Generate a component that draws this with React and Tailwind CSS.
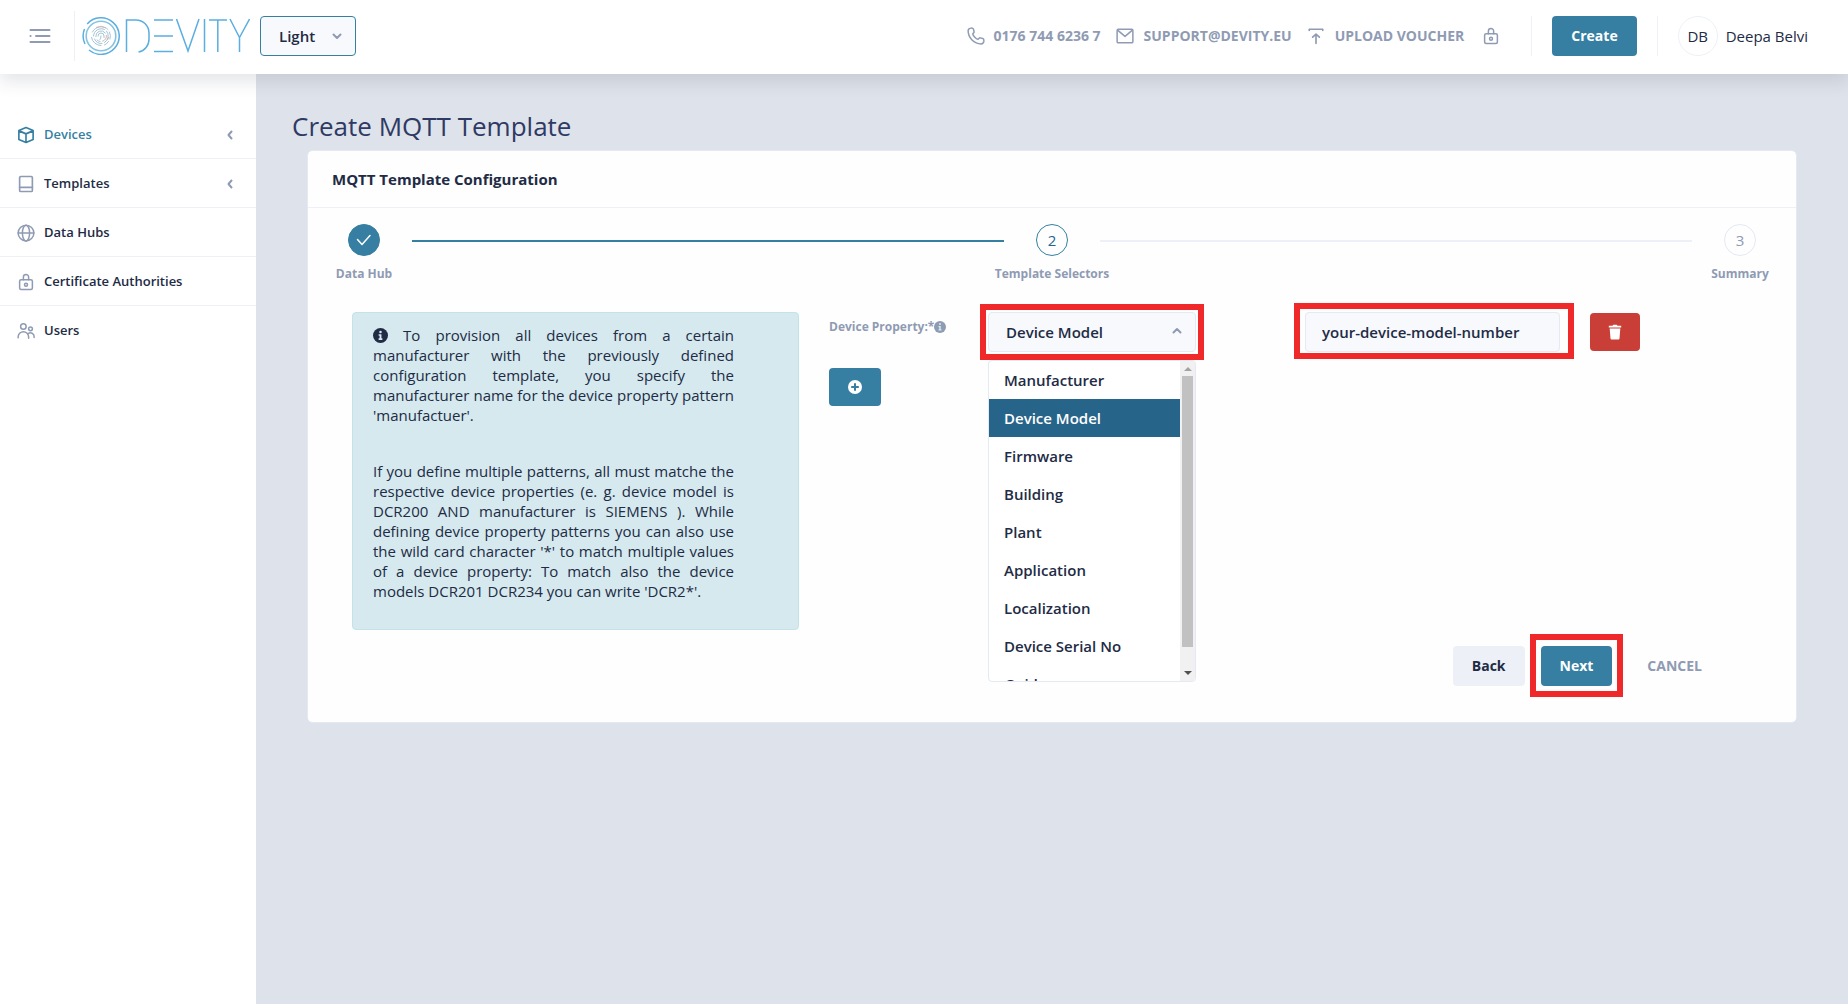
import React from "react";

const stroke = {
  fill: "none",
  stroke: "currentColor",
  strokeWidth: 2,
  strokeLinecap: "round",
  strokeLinejoin: "round",
};

function LockIcon({ className }) {
  return (
    <svg viewBox="0 0 24 24" className={className} aria-hidden="true" {...stroke}>
      <rect x="3.500" y="9" width="17" height="13" rx="2" />
      <path d="M8.500 9V5.500a3.500 3.500 0 0 1 7 0V9" />
      <circle cx="12" cy="15.500" r="2" />
    </svg>
  );
}

function CubeIcon({ className }) {
  return (
    <svg viewBox="0 0 24 24" className={className} aria-hidden="true" {...stroke} strokeWidth="2.200">
      <path d="M12 2 21.500 6v12L12 22l-9.500-4V6zM3 6.500l9 4 9-4M12 11v10.500" />
    </svg>
  );
}

function BookIcon({ className }) {
  return (
    <svg viewBox="0 0 24 24" className={className} aria-hidden="true" {...stroke} strokeWidth="2.200">
      <rect x="3.500" y="2" width="17" height="20" rx="1.500" />
      <path d="M3.500 16.500h17" />
    </svg>
  );
}

function GlobeIcon({ className }) {
  return (
    <svg viewBox="0 0 24 24" className={className} aria-hidden="true" {...stroke}>
      <circle cx="12" cy="12" r="10.500" />
      <ellipse cx="12" cy="12" rx="4.800" ry="10.500" />
      <path d="M1.500 12h21" />
    </svg>
  );
}

function PeopleIcon({ className }) {
  return (
    <svg viewBox="0 0 24 24" className={className} aria-hidden="true" {...stroke}>
      <circle cx="8.500" cy="6" r="3.700" />
      <circle cx="18" cy="9" r="2.500" />
      <path d="M1.500 21v-1a6.800 6.800 0 0 1 14 0v1.500M15 15.500A4.800 4.800 0 0 1 22.800 19.400V20.500" />
    </svg>
  );
}

function PhoneIcon({ className }) {
  return (
    <svg viewBox="0 0 24 24" className={className} aria-hidden="true" {...stroke}>
      <path d="M5.100 1.500c1.600-.2 3.100.2 3.500 1.400l.9 3.600c.3 1.200-1.800 1.900-1.800 2.800 0 2 5 7 7 7 .9 0 1.600-2.100 2.800-1.800l3.600.9c1.200.4 1.600 1.900 1.400 3.500-.3 2-1.800 3.600-3.600 3.600C9.500 22.500 1.500 14.500 1.500 5.100c0-1.800 1.600-3.300 3.600-3.600z" />
    </svg>
  );
}

function MailIcon({ className }) {
  return (
    <svg viewBox="0 0 24 24" className={className} aria-hidden="true" {...stroke}>
      <rect x="1.500" y="3" width="21" height="18" rx="1.500" />
      <path d="m2.500 4.500 9.500 8 9.500-8" />
    </svg>
  );
}

function UploadIcon({ className }) {
  return (
    <svg viewBox="0 0 24 24" className={className} aria-hidden="true" {...stroke} strokeWidth="2.200">
      <path d="M3 4.500V3h18v1.500M12 22V9.500M7.500 13.500 12 9.500l4.500 4" />
    </svg>
  );
}

function Chevron({ className, d = "m5 9 7 7 7-7" }) {
  return (
    <svg viewBox="0 0 24 24" className={className} aria-hidden="true" {...stroke} strokeWidth="4">
      <path d={d} />
    </svg>
  );
}

function InfoIcon({ className }) {
  return (
    <svg viewBox="0 0 24 24" className={className} aria-hidden="true">
      <circle cx="12" cy="12" r="12" fill="currentColor" />
      <g className="fill-[#d5e9ee]">
        <circle cx="12" cy="6.200" r="2" />
        <path d="M9 10h4.500v6.500H15V19H9v-2.500h1.500v-4H9z" />
      </g>
    </svg>
  );
}

function Logo({ className }) {
  return (
    <svg viewBox="0 0 168 38" className={className} role="img" aria-label="Devity" fill="none">
      <g stroke="#5aaee0" strokeWidth="1.500">
        <path d="M5.200 7A18.300 18.300 0 1 1 7 33" />
        <path d="M2.500 12A18.500 18.500 0 0 0 3 27" />
        <circle cx="19" cy="19" r="14.800" stroke="#86c3e0" strokeWidth="1.600" />
        <path d="M44.500 35V3H54a13 13 0 0 1 13 13v6a13 13 0 0 1-10.500 13" />
        <path d="M72 3h19M72 19h19M72 34.500h19" />
        <path d="m94.500 2 11.500 32L117 2M122.500 2v33M127 3h18M135.800 3v32M148 2l9.500 18.500L167.500 2M157.500 20.500V35" />
      </g>
      <g stroke="#a3c4d6" strokeWidth="1" strokeLinecap="round">
        <path d="M10.500 15a9.500 9.500 0 0 1 15.500-2.500M27.500 15a9.500 9.500 0 0 1 .5 7M26.500 24.500a9.500 9.500 0 0 1-4 3.500M19 28.500a9.500 9.500 0 0 1-9.500-8" />
        <path d="M11.500 19a7.500 7.500 0 0 1 11-6.500M24.500 14a7.500 7.500 0 0 1-2 11.500M20 26.500a7.500 7.500 0 0 1-7.500-4.500" />
        <path d="M13.800 19.500a5.300 5.300 0 0 1 9.500-3.500M15 23a5.300 5.300 0 0 0 3 1.500M16 19a3 3 0 0 1 6 0v1.500M18 22.500q1-1.500 1-3.500" />
      </g>
      <path d="M14 10.500a10 10 0 0 1 10 .5M24.300 18a5.500 5.500 0 0 1-4 6.300M26.500 20a7.500 7.500 0 0 1-1 3" stroke="#cdb9b9" />
    </svg>
  );
}

const navItems = [
  { label: "Devices", Icon: CubeIcon, active: true, expandable: true },
  { label: "Templates", Icon: BookIcon, expandable: true },
  { label: "Data Hubs", Icon: GlobeIcon },
  { label: "Certificate Authorities", Icon: LockIcon },
  { label: "Users", Icon: PeopleIcon },
];

const properties = [
  "Manufacturer",
  "Device Model",
  "Firmware",
  "Building",
  "Plant",
  "Application",
  "Localization",
  "Device Serial No",
  "Guid",
];

function Highlight({ className }) {
  return <span className={`pointer-events-none absolute z-20 border-6 border-[#ef2929] ${className}`} />;
}

function Header() {
  return (
    <header className="relative z-30 flex h-[74px] shrink-0 items-center bg-white pr-10 pb-0.5 shadow-[0_8px_16px_0_rgba(44,51,73,0.12)]">
      <button type="button" aria-label="Toggle menu" className="ml-7 text-[#8f9bb3]">
        <svg viewBox="0 0 24 18" className="h-[18px] w-6" aria-hidden="true" {...stroke}>
          <path d="M2.500 3h19M8 9h13.500M2.500 15h19M2.500 9h.1" />
        </svg>
      </button>
      <div className="ml-[22px] h-[50px] w-px bg-[#edf1f7]" />
      <a href="#home" className="ml-[7px]">
        <Logo className="h-[38px] w-[168px]" />
      </a>
      <div className="relative ml-[10px]">
        <select
          aria-label="Theme"
          className="h-10 w-24 appearance-none rounded border border-[#367fa2] bg-[#f7f9fc] pl-[18px] text-[15px] font-semibold"
        >
          <option>Light</option>
        </select>
        <Chevron className="pointer-events-none absolute top-[14px] right-[13px] size-3 text-[#8f9bb3]" />
      </div>
      <div className="ml-auto flex items-center text-sm font-bold text-[#8f9bb3]">
        <a href="#phone" className="flex items-center gap-[9px]">
          <PhoneIcon className="size-[18px]" />
          0176 744 6236 7
        </a>
        <a href="#mail" className="ml-[15px] flex items-center gap-[10px]">
          <MailIcon className="size-[18px]" />
          SUPPORT@DEVITY.EU
        </a>
        <a href="#voucher" className="ml-[15px] flex items-center gap-[10px]">
          <UploadIcon className="size-[18px]" />
          UPLOAD VOUCHER
        </a>
        <button type="button" aria-label="Lock" className="ml-[18px]">
          <LockIcon className="size-[18px]" />
        </button>
      </div>
      <div className="ml-[31px] h-10 w-px bg-[#edf1f7]" />
      <button type="button" className="ml-5 h-10 rounded bg-[#367fa2] px-[19px] text-sm font-bold text-white">
        Create
      </button>
      <div className="ml-5 h-10 w-px bg-[#edf1f7]" />
      <button type="button" className="ml-5 flex items-center gap-2 text-[15px]">
        <span className="flex size-10 items-center justify-center rounded-full border border-[#edf1f7]">DB</span>
        Deepa Belvi
      </button>
    </header>
  );
}

function Sidebar() {
  return (
    <nav className="w-64 shrink-0 bg-white pt-9">
      <ul className="divide-y divide-[#edf1f7]">
        {navItems.map(({ label, Icon, active, expandable }) => (
          <li key={label}>
            <a
              href="#nav"
              className={`flex h-12 items-center gap-[9px] pt-0.5 pr-5 pl-[17px] text-[13px] font-semibold ${active ? "text-[#367fa2]" : ""}`}
            >
              <Icon className={`size-[18px] ${active ? "" : "text-[#8f9bb3]"}`} />
              {label}
              {expandable && <Chevron d="m15 5-6 7 6 7" className="ml-auto size-3 text-[#8f9bb3]" />}
            </a>
          </li>
        ))}
      </ul>
    </nav>
  );
}

function Step({ mark, label, className }) {
  return (
    <li className="flex w-8 flex-col items-center gap-2.5">
      <span className={`flex size-8 items-center justify-center rounded-full border text-[15px] ${className}`}>{mark}</span>
      <span className="text-xs leading-4 font-bold whitespace-nowrap text-[#8f9bb3]">{label}</span>
    </li>
  );
}

function Stepper() {
  return (
    <ol className="flex px-10 pt-4">
      <Step
        label="Data Hub"
        className="border-[#367fa2] bg-[#367fa2] text-white"
        mark={
          <svg viewBox="0 0 16 16" className="size-4" aria-label="Done" {...stroke} strokeWidth="1.500">
            <path d="m1.500 7.500 4.500 5 8-9" />
          </svg>
        }
      />
      <li aria-hidden="true" className="mx-8 mt-4 h-0.5 flex-1 bg-[#367fa2]" />
      <Step label="Template Selectors" mark="2" className="border-[#367fa2] text-[#27648a]" />
      <li aria-hidden="true" className="mx-8 mt-4 h-0.5 flex-1 bg-[#edf1f7]" />
      <Step label="Summary" mark="3" className="border-[#e4e9f2] text-[#8f9bb3]" />
    </ol>
  );
}

function PropertySelect() {
  return (
    <div className="relative w-52">
      <select
        id="device-property"
        defaultValue="Device Model"
        className="h-10 w-full appearance-none rounded border border-[#e4e9f2] bg-[#f7f9fc] pl-[17px] text-[15px] font-semibold"
      >
        {properties.map((p) => (
          <option key={p}>{p}</option>
        ))}
      </select>
      <Chevron d="m5 15 7-7 7 7" className="pointer-events-none absolute top-[13px] right-[13px] size-3 text-[#8f9bb3]" />
      <Highlight className="-inset-x-2 -inset-y-2" />
      <div className="absolute top-12 left-0 z-10 flex h-[322px] w-full overflow-hidden rounded border border-[#e4e9f2] bg-white">
        <ul role="listbox" aria-label="Device Property" className="flex-1">
          {properties.map((p) => (
            <li
              key={p}
              role="option"
              aria-selected={p === "Device Model"}
              className={`flex h-[38px] items-center px-[15px] text-[15px] font-semibold ${p === "Device Model" ? "bg-[#27648a] text-white" : ""}`}
            >
              {p}
            </li>
          ))}
        </ul>
        <div aria-hidden="true" className="flex w-[15px] flex-col items-center bg-[#f1f1f1] py-1.5">
          <svg viewBox="0 0 8 4" className="h-1 w-2 fill-[#a3a3a3]"><path d="M0 4 4 0l4 4z" /></svg>
          <div className="mt-[5px] mb-6 w-[11px] flex-1 bg-[#c1c1c1]" />
          <svg viewBox="0 0 8 4" className="h-1 w-2 fill-[#505050]"><path d="M0 0h8L4 4z" /></svg>
        </div>
      </div>
    </div>
  );
}

export default function App() {
  return (
    <div className="flex min-h-screen flex-col bg-[#dee2ea] font-['Open_Sans',sans-serif] text-[#222b45]">
      <Header />
      <div className="flex flex-1">
        <Sidebar />
        <main className="min-w-0 flex-1 pt-9 pr-[52px] pl-9">
          <h1 className="text-[26px] leading-8 text-[#2e3a64]">Create MQTT Template</h1>
          <section className="mt-[9px] ml-4 rounded bg-[#fefefe] pb-9 outline outline-[#e4e9f2]">
            <h2 className="border-b border-[#edf1f7] px-6 py-4 text-[15px] leading-6 font-bold">
              MQTT Template Configuration
            </h2>
            <Stepper />
            <form className="mt-[30px] px-11" onSubmit={(e) => e.preventDefault()}>
              <div className="grid grid-cols-[477fr_159fr_317fr_285fr_162fr] items-start">
                <div className="mr-[30px] h-[318px] rounded border border-[#c3e3e9] bg-[#d5e9ee] py-3 pr-16 pl-5 text-justify text-[15px] leading-5">
                  <p>
                    <InfoIcon className="inline size-[15px] align-[-2px]" /> To provision all devices from a certain
                    manufacturer with the previously defined configuration template, you specify the manufacturer name
                    for the device property pattern 'manufactuer'.
                  </p>
                  <p className="mt-9">
                    If you define multiple patterns, all must matche the respective device properties (e. g. device
                    model is DCR200 AND manufacturer is SIEMENS ). While defining device property patterns you can also
                    use the wild card character '*' to match multiple values of a device property: To match also the
                    device models DCR201 DCR234 you can write 'DCR2*'.
                  </p>
                </div>
                <div>
                  <label
                    htmlFor="device-property"
                    className="flex items-center pt-[7px] text-xs leading-4 font-bold whitespace-nowrap text-[#8f9bb3]"
                  >
                    Device Property:*
                    <InfoIcon className="size-3" />
                  </label>
                  <button
                    type="button"
                    aria-label="Add property"
                    className="mt-[33px] flex h-[38px] w-[52px] items-center justify-center rounded bg-[#367fa2] text-white"
                  >
                    <svg viewBox="0 0 14 14" className="size-3.5" aria-hidden="true">
                      <circle cx="7" cy="7" r="7" fill="currentColor" />
                      <path d="M7 3.200v7.600M3.200 7h7.600" className="stroke-[#367fa2]" strokeWidth="2" />
                    </svg>
                  </button>
                </div>
                <PropertySelect />
                <div className="relative mr-[30px]">
                  <input
                    type="text"
                    aria-label="Property pattern"
                    defaultValue="your-device-model-number"
                    className="h-10 w-full rounded border border-[#e4e9f2] bg-[#f7f9fc] px-4 text-[15px] font-semibold"
                  />
                  <Highlight className="-top-[9px] -right-[14px] -bottom-[7px] -left-[11px]" />
                </div>
                <button
                  type="button"
                  aria-label="Delete property"
                  className="mt-px flex h-[38px] w-[50px] items-center justify-center rounded bg-[#c93f38] text-white"
                >
                  <svg viewBox="0 0 14 16" className="h-4 w-3.5" fill="currentColor" aria-hidden="true">
                    <path d="M.8 1.800h3.700L5.300.8h3.400l.8 1h3.700v1.700H.8zM1.700 4.500h10.600l-.8 10.100q-.1 1-1.100 1H3.600q-1 0-1.100-1z" />
                  </svg>
                </button>
              </div>
              <div className="mt-4 flex justify-end pr-[50px] text-sm font-bold">
                <button type="button" className="h-10 rounded bg-[#edf1f7] px-[19px]">Back</button>
                <div className="relative ml-4">
                  <button type="submit" className="h-10 rounded bg-[#367fa2] px-[19px] text-white">Next</button>
                  <Highlight className="-inset-x-[11px] -top-3 -bottom-[11px]" />
                </div>
                <button type="button" className="ml-[35px] h-10 text-[#8f9bb3]">CANCEL</button>
              </div>
            </form>
          </section>
        </main>
      </div>
    </div>
  );
}
